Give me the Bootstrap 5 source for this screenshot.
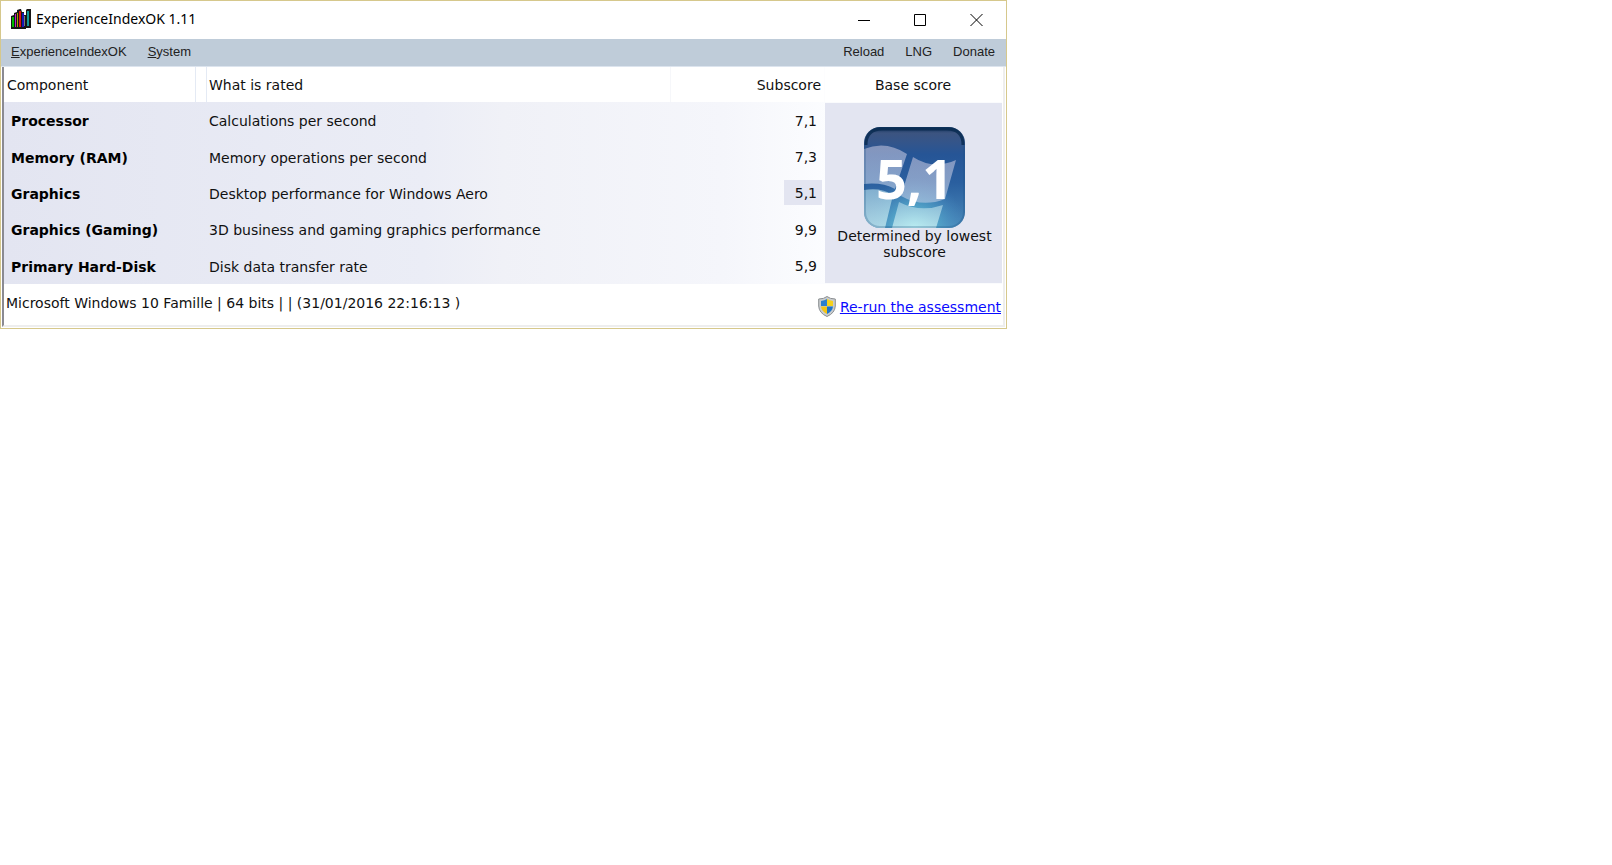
<!DOCTYPE html>
<html lang="en">
<head>
<meta charset="utf-8">
<meta name="viewport" content="width=device-width, initial-scale=1">
<title>ExperienceIndexOK 1.11</title>
<link href="https://cdn.jsdelivr.net/npm/bootstrap@5.3.0/dist/css/bootstrap.min.css" rel="stylesheet">
<style>
  body { font: 14px/16px "DejaVu Sans", Verdana, sans-serif; color: #111; background: #fff; }
  .app-window { max-width: 1007px; border: 1px solid #d6c88c; }
  .title-bar { height: 38px; padding: 0 2px 2px 10px; }
  .title-text { font: 14px/20px "Noto Sans", "Segoe UI", sans-serif; color: #000; margin-left: 5px; }
  .win-btn { width: 56px; height: 36px; border: 0; background: none; padding: 0; }
  .menu-bar { height: 28px; background: #bfccd9; border-bottom: 1px solid #dce4ee; font: 13px/20px "Liberation Sans", Arial, sans-serif; padding: 0 11px 1px 10px; }
  .menu-bar, .menu-group { gap: 21px; }
  .menu-bar a { color: #222; text-decoration: none; }
  .client-area { border-left: 2px solid #8a8a92; border-bottom: 2px solid #eee; border-right: 2px solid #eee; margin: 0 1px 1px; }
  .score-table { table-layout: fixed; border-collapse: separate; border-spacing: 0; margin-right: 1px; width: calc(100% - 1px); }
  .col-component { width: 192px; }
  .col-gap { width: 11px; }
  .col-score { width: 154px; }
  .col-base { width: 177px; }
  .score-table th, .score-table td { padding: 2px 0 0; vertical-align: middle; }
  .score-table thead th { height: 35px; padding-top: 0; font-weight: 400; border-right: 1px solid #e4eaf4; }
  .score-table thead th:nth-child(3) { border-right-color: #f6f7fa; }
  .score-table thead th:nth-child(n+4) { border-right-color: #fdfdfe; }
  .score-table tbody { background: linear-gradient(90deg, #e3e5f1, #ebedf6 42%, #f0f1f7 50%, #f5f6fb 72%, #fcfdff 83%); }
  .score-table .pad-head { padding-left: 3px; }
  .score-table .pad-name { padding-left: 7px; font-weight: 700; color: #000; }
  .score-table .pad-text { padding-left: 2px; }
  .score-table .pad-score { padding-right: 3px; text-align: right; }
  .score-table tbody .pad-score { padding-top: 0; }
  .score-value { display: inline-block; width: 38px; padding: 5px 5px 4px 0; vertical-align: middle; }
  .score-lowest { background: #e3e5f1; }
  .score-table .base-cell { height: 182px; border-top: 1px solid #fafbfd; border-bottom: 1px solid #fafbfd; background: #e3e5f1; vertical-align: top; padding: 24px 0 0 2px; text-align: center; }
  .base-logo { width: 101px; height: 101px; }
  .base-value { font: 700 54px/54px "Open Sans", "Segoe UI", sans-serif; color: #fff; }
  .status-row { height: 41px; padding: 0 2px; }
  .status-text { padding-top: 11px; }
  .rerun { color: #0a0aff; text-decoration: underline; }
</style>
</head>
<body>
<main class="app-window">
  <header class="title-bar d-flex align-items-center">
    <svg width="20" height="20" viewBox="0 0 20 20" aria-hidden="true">
      <path d="M0 20V7L3 6V4L6 3V1L9 0H10L11 3H14L15 1L16 0H20V19H15V20Z" fill="#161616"/>
      <path d="M1 8H3V18H1Z" fill="#0b0"/><path d="M4 5H5V18H4Z" fill="#c020c8"/>
      <path d="M6 4H7V18H6Z" fill="#a89c00"/><path d="M8 2H10V18H8Z" fill="#e01010"/>
      <path d="M11 4H13V18H11Z" fill="#1515b8"/><path d="M16 2H18V17H16Z" fill="#109898"/>
      <path d="M13 7H14V17H13Z" fill="#777"/><path d="M13 0H15V6H13Z" fill="#fff"/>
    </svg>
    <span class="title-text">ExperienceIndexOK 1.11</span>
    <div class="d-flex ms-auto">
      <button class="win-btn" type="button" aria-label="Minimize"><svg width="13" height="13" viewBox="0 0 13 13"><path d="M0 6.5H12" stroke="#000"/></svg></button>
      <button class="win-btn" type="button" aria-label="Maximize"><svg width="13" height="13" viewBox="0 0 13 13"><path d="M.5 .5H11.5V11.5H.5Z" fill="none" stroke="#000"/></svg></button>
      <button class="win-btn" type="button" aria-label="Close"><svg width="13" height="13" viewBox="0 0 13 13"><path d="M.5 0L12.5 12M12.5 0L.5 12" stroke="#000"/></svg></button>
    </div>
  </header>
  <nav class="menu-bar d-flex align-items-center">
    <a href="#"><u>E</u>xperienceIndexOK</a>
    <a href="#"><u>S</u>ystem</a>
    <div class="menu-group d-flex ms-auto">
      <a href="#">Reload</a><a href="#">LNG</a><a href="#">Donate</a>
    </div>
  </nav>
  <div class="client-area">
    <table class="score-table">
      <colgroup><col class="col-component"><col class="col-gap"><col><col class="col-score"><col class="col-base"></colgroup>
      <thead>
        <tr><th class="pad-head" scope="col">Component</th><th></th><th class="pad-text" scope="col">What is rated</th><th class="pad-score" scope="col">Subscore</th><th class="text-center" scope="col">Base score</th></tr>
      </thead>
      <tbody>
        <tr><th class="pad-name" scope="row">Processor</th><td></td><td class="pad-text">Calculations per second</td><td class="pad-score"><span class="score-value">7,1</span></td>
          <td class="base-cell" rowspan="5">
            <div class="base-logo position-relative mx-auto">
              <svg class="d-block" width="101" height="101" viewBox="0 0 101 101" aria-hidden="true">
                <defs>
                  <linearGradient id="sky" x1="0" y1="0" x2="0" y2="1"><stop offset="0" stop-color="#0b2c54"/><stop offset=".06" stop-color="#3c5480"/><stop offset=".15" stop-color="#34558a"/><stop offset=".27" stop-color="#265596"/><stop offset=".55" stop-color="#2a5f9f"/><stop offset="1" stop-color="#4a8aba"/></linearGradient>
                  <radialGradient id="glow" cx=".5" cy="1" r=".5"><stop offset="0" stop-color="#7fdde8"/><stop offset=".5" stop-color="#58b0d0" stop-opacity=".6"/><stop offset="1" stop-color="#4a90c8" stop-opacity="0"/></radialGradient>
                  <linearGradient id="pane" x1="0" y1="0" x2="0" y2="1"><stop offset="0" stop-color="#b9bcd8" stop-opacity=".62"/><stop offset="1" stop-color="#b4c8e2" stop-opacity=".66"/></linearGradient>
                  <linearGradient id="pane-low" x1="0" y1="0" x2="0" y2="1"><stop offset="0" stop-color="#a6cfe2" stop-opacity=".7"/><stop offset="1" stop-color="#d4f4f5" stop-opacity=".7"/></linearGradient>
                  <clipPath id="tile"><rect width="101" height="101" rx="16"/></clipPath>
                </defs>
                <g clip-path="url(#tile)">
                  <rect width="101" height="101" fill="url(#sky)"/>
                  <rect width="101" height="101" fill="url(#glow)"/>
                  <path d="M0 22Q22 13 43 27L31 62Q18 55 0 57Z" fill="url(#pane)"/>
                  <path d="M49 30Q69 43 92 33L81 72Q58 81 37 69Z" fill="url(#pane)"/>
                  <path d="M0 63Q17 60 29 68L21 101H0Z" fill="url(#pane-low)"/>
                  <path d="M35 75Q56 86 79 78L72 101H28Z" fill="url(#pane-low)"/>
                </g>
                <rect x="1" y="1" width="99" height="99" rx="15" fill="none" stroke="#1c5080" stroke-opacity=".25" stroke-width="2"/>
                <path d="M2 18Q2 2 18 2H83Q99 2 99 18" fill="none" stroke="#07294f" stroke-opacity=".8" stroke-width="3"/>
              </svg>
              <span class="base-value position-absolute top-50 start-50 translate-middle">5,1</span>
            </div>
            Determined by lowest<br>subscore
          </td></tr>
        <tr><th class="pad-name" scope="row">Memory (RAM)</th><td></td><td class="pad-text">Memory operations per second</td><td class="pad-score"><span class="score-value">7,3</span></td></tr>
        <tr><th class="pad-name" scope="row">Graphics</th><td></td><td class="pad-text">Desktop performance for Windows Aero</td><td class="pad-score"><span class="score-value score-lowest">5,1</span></td></tr>
        <tr><th class="pad-name" scope="row">Graphics (Gaming)</th><td></td><td class="pad-text">3D business and gaming graphics performance</td><td class="pad-score"><span class="score-value">9,9</span></td></tr>
        <tr><th class="pad-name" scope="row">Primary Hard-Disk</th><td></td><td class="pad-text">Disk data transfer rate</td><td class="pad-score"><span class="score-value">5,9</span></td></tr>
      </tbody>
    </table>
    <footer class="status-row d-flex justify-content-between">
      <span class="status-text">Microsoft Windows 10 Famille | 64 bits | | (31/01/2016 22:16:13 )</span>
      <span class="d-flex align-items-center pt-1">
        <svg class="me-1" width="18" height="21" viewBox="0 0 18 21" aria-hidden="true">
          <path d="M9 .5Q12 3 17.3 3V10Q17 17 9 20.5Q1 17 .7 10V3Q6 3 9 .5Z" fill="#c9ccce" stroke="#8b8f92"/>
          <path d="M9 3Q6.500 4.700 3 5V10H9Z" fill="#2a7fd0"/><path d="M9 3Q11.500 4.700 15 5V10H9Z" fill="#f6d21c"/>
          <path d="M3 10.500H9V18Q3.500 15 3 10.500Z" fill="#f4c414"/><path d="M15 10.500H9V18Q14.500 15 15 10.500Z" fill="#1f74c8"/>
        </svg>
        <a href="#" class="rerun">Re-run the assessment</a>
      </span>
    </footer>
  </div>
</main>
<script src="https://cdn.jsdelivr.net/npm/bootstrap@5.3.0/dist/js/bootstrap.bundle.min.js"></script>
</body>
</html>
